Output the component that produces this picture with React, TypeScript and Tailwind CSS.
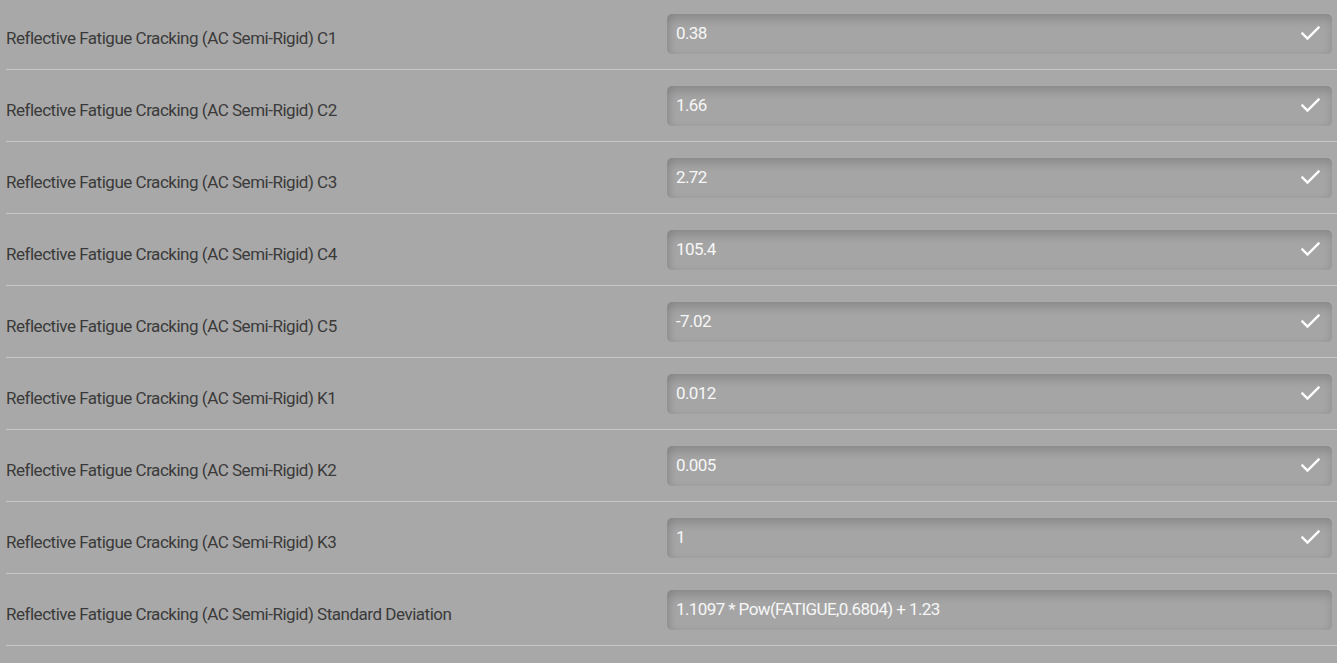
import React from "react";

const rows: { label: string; value: string; check: boolean }[] = [
  { label: "Reflective Fatigue Cracking (AC Semi-Rigid) C1", value: "0.38", check: true },
  { label: "Reflective Fatigue Cracking (AC Semi-Rigid) C2", value: "1.66", check: true },
  { label: "Reflective Fatigue Cracking (AC Semi-Rigid) C3", value: "2.72", check: true },
  { label: "Reflective Fatigue Cracking (AC Semi-Rigid) C4", value: "105.4", check: true },
  { label: "Reflective Fatigue Cracking (AC Semi-Rigid) C5", value: "-7.02", check: true },
  { label: "Reflective Fatigue Cracking (AC Semi-Rigid) K1", value: "0.012", check: true },
  { label: "Reflective Fatigue Cracking (AC Semi-Rigid) K2", value: "0.005", check: true },
  { label: "Reflective Fatigue Cracking (AC Semi-Rigid) K3", value: "1", check: true },
  { label: "Reflective Fatigue Cracking (AC Semi-Rigid) Standard Deviation", value: "1.1097 * Pow(FATIGUE,0.6804) + 1.23", check: false },
];

function Check() {
  return (
    <svg width="19" height="15" viewBox="0 0 19 15" fill="none">
      <path d="M1.5 7.5 L6.5 12.5 L17.5 1.5" stroke="#ffffff" strokeWidth="2.3" strokeLinecap="square" />
    </svg>
  );
}

export default function App() {
  return (
    <div
      className="w-[1337px] h-[663px] overflow-hidden bg-[#a8a8a8] pl-[6px]"
      style={{ fontFamily: "Roboto, 'Liberation Sans', sans-serif" }}
    >
      <div className="-mt-[2px]">
        {rows.map((r) => (
          <div key={r.label} className="flex items-center h-[72px] border-b border-[#c8c8c8]">
            <div className="w-[661px] pt-[10px] text-[17px] text-[#3a3a3a] tracking-[-0.48px] whitespace-nowrap">
              {r.label}
            </div>
            <div className="w-[665px] h-[40px] rounded-[5px] bg-[#a5a5a5] shadow-[inset_0_6px_10px_rgba(0,0,0,0.14),inset_4px_0_6px_rgba(0,0,0,0.06)] flex items-center pl-[9px] pr-[12px]">
              <span className="flex-1 text-[17px] text-[#f7f7f7] tracking-[-0.6px] pt-[1px]">{r.value}</span>
              {r.check && <Check />}
            </div>
          </div>
        ))}
      </div>
    </div>
  );
}
